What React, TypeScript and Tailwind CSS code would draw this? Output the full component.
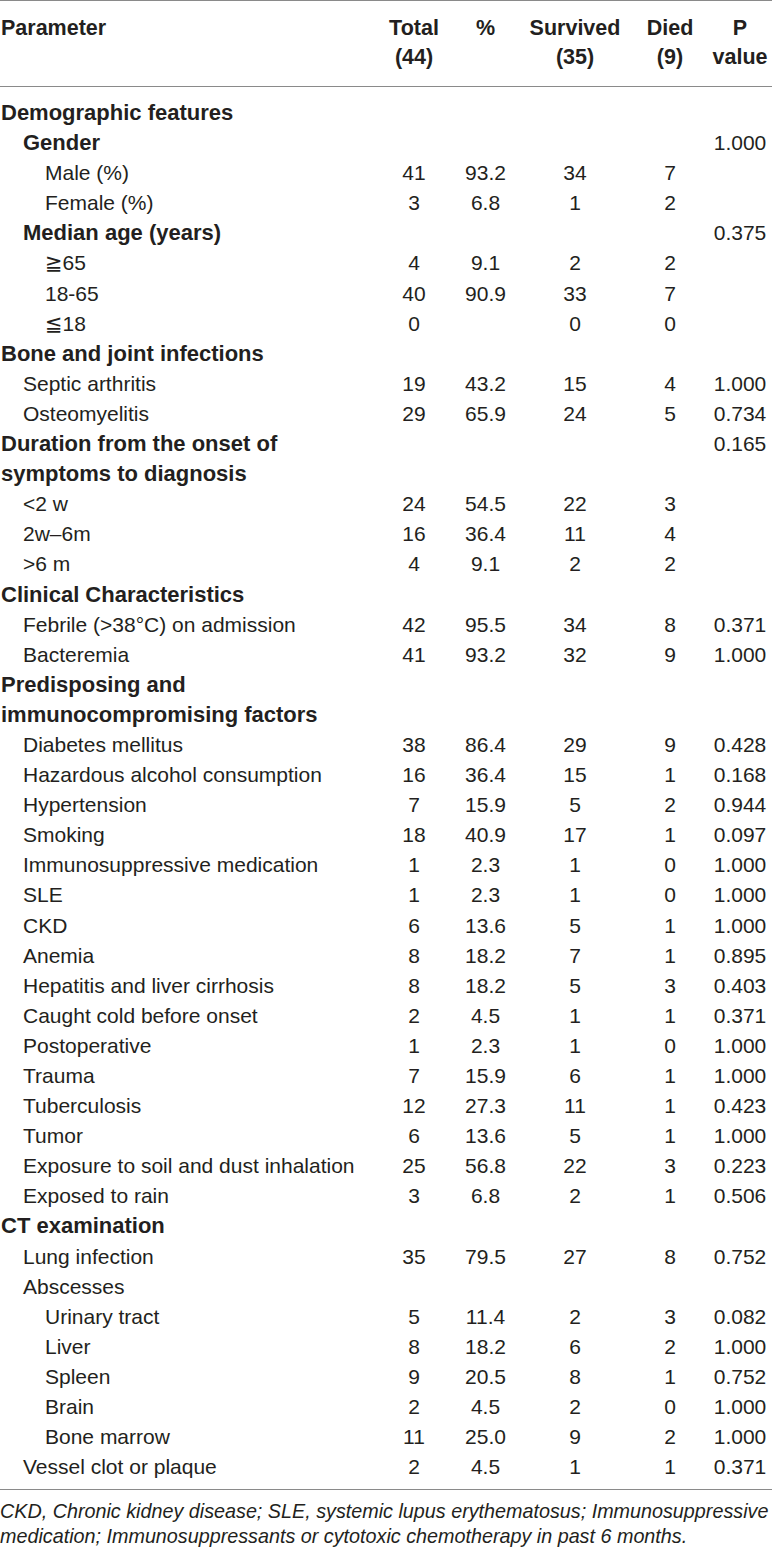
import React from "react";

type Row = {
  label: React.ReactNode;
  kind: "h0" | "h1" | "r1" | "r2";
  v?: [string, string, string, string, string];
};

const rows: Row[] = [
  { label: "Demographic features", kind: "h0" },
  { label: "Gender", kind: "h1", v: ["", "", "", "", "1.000"] },
  { label: "Male (%)", kind: "r2", v: ["41", "93.2", "34", "7", ""] },
  { label: "Female (%)", kind: "r2", v: ["3", "6.8", "1", "2", ""] },
  { label: "Median age (years)", kind: "h1", v: ["", "", "", "", "0.375"] },
  { label: "≧65", kind: "r2", v: ["4", "9.1", "2", "2", ""] },
  { label: "18-65", kind: "r2", v: ["40", "90.9", "33", "7", ""] },
  { label: "≦18", kind: "r2", v: ["0", "", "0", "0", ""] },
  { label: "Bone and joint infections", kind: "h0" },
  { label: "Septic arthritis", kind: "r1", v: ["19", "43.2", "15", "4", "1.000"] },
  { label: "Osteomyelitis", kind: "r1", v: ["29", "65.9", "24", "5", "0.734"] },
  {
    label: (
      <>
        Duration from the onset of
        <br />
        symptoms to diagnosis
      </>
    ),
    kind: "h0",
    v: ["", "", "", "", "0.165"],
  },
  { label: "<2 w", kind: "r1", v: ["24", "54.5", "22", "3", ""] },
  { label: "2w–6m", kind: "r1", v: ["16", "36.4", "11", "4", ""] },
  { label: ">6 m", kind: "r1", v: ["4", "9.1", "2", "2", ""] },
  { label: "Clinical Characteristics", kind: "h0" },
  { label: "Febrile (>38°C) on admission", kind: "r1", v: ["42", "95.5", "34", "8", "0.371"] },
  { label: "Bacteremia", kind: "r1", v: ["41", "93.2", "32", "9", "1.000"] },
  {
    label: (
      <>
        Predisposing and
        <br />
        immunocompromising factors
      </>
    ),
    kind: "h0",
  },
  { label: "Diabetes mellitus", kind: "r1", v: ["38", "86.4", "29", "9", "0.428"] },
  { label: "Hazardous alcohol consumption", kind: "r1", v: ["16", "36.4", "15", "1", "0.168"] },
  { label: "Hypertension", kind: "r1", v: ["7", "15.9", "5", "2", "0.944"] },
  { label: "Smoking", kind: "r1", v: ["18", "40.9", "17", "1", "0.097"] },
  { label: "Immunosuppressive medication", kind: "r1", v: ["1", "2.3", "1", "0", "1.000"] },
  { label: "SLE", kind: "r1", v: ["1", "2.3", "1", "0", "1.000"] },
  { label: "CKD", kind: "r1", v: ["6", "13.6", "5", "1", "1.000"] },
  { label: "Anemia", kind: "r1", v: ["8", "18.2", "7", "1", "0.895"] },
  { label: "Hepatitis and liver cirrhosis", kind: "r1", v: ["8", "18.2", "5", "3", "0.403"] },
  { label: "Caught cold before onset", kind: "r1", v: ["2", "4.5", "1", "1", "0.371"] },
  { label: "Postoperative", kind: "r1", v: ["1", "2.3", "1", "0", "1.000"] },
  { label: "Trauma", kind: "r1", v: ["7", "15.9", "6", "1", "1.000"] },
  { label: "Tuberculosis", kind: "r1", v: ["12", "27.3", "11", "1", "0.423"] },
  { label: "Tumor", kind: "r1", v: ["6", "13.6", "5", "1", "1.000"] },
  { label: "Exposure to soil and dust inhalation", kind: "r1", v: ["25", "56.8", "22", "3", "0.223"] },
  { label: "Exposed to rain", kind: "r1", v: ["3", "6.8", "2", "1", "0.506"] },
  { label: "CT examination", kind: "h0" },
  { label: "Lung infection", kind: "r1", v: ["35", "79.5", "27", "8", "0.752"] },
  { label: "Abscesses", kind: "r1" },
  { label: "Urinary tract", kind: "r2", v: ["5", "11.4", "2", "3", "0.082"] },
  { label: "Liver", kind: "r2", v: ["8", "18.2", "6", "2", "1.000"] },
  { label: "Spleen", kind: "r2", v: ["9", "20.5", "8", "1", "0.752"] },
  { label: "Brain", kind: "r2", v: ["2", "4.5", "2", "0", "1.000"] },
  { label: "Bone marrow", kind: "r2", v: ["11", "25.0", "9", "2", "1.000"] },
  { label: "Vessel clot or plaque", kind: "r1", v: ["2", "4.5", "1", "1", "0.371"] },
];

const grid = "grid grid-cols-[384px_60px_83px_96px_85px_64px]";

function labelClass(kind: Row["kind"]) {
  switch (kind) {
    case "h0":
      return "font-bold text-[22px] pl-[1px]";
    case "h1":
      return "font-bold text-[22px] pl-[23px]";
    case "r1":
      return "pl-[23px]";
    case "r2":
      return "pl-[45px]";
  }
}

export default function App() {
  return (
    <div
      className="w-[772px] bg-white text-[#231f20] text-[21px] leading-[30.1px]"
      style={{ fontFamily: '"Liberation Sans", Arial, "DejaVu Sans", sans-serif' }}
    >
      <div className="border-t border-[#8a8a8a]" />
      <div
        className={`${grid} font-bold text-[21.5px] pt-[13px] pb-[14px] leading-[29px] border-b border-[#8a8a8a]`}
      >
        <div className="pl-[1px]">Parameter</div>
        <div className="text-center">
          Total
          <br />
          (44)
        </div>
        <div className="text-center">%</div>
        <div className="text-center">
          Survived
          <br />
          (35)
        </div>
        <div className="text-center pl-[9px]">
          Died
          <br />
          (9)
        </div>
        <div className="text-center">
          P
          <br />
          value
        </div>
      </div>
      <div className="pt-[11px] pb-[7px] border-b border-[#8a8a8a]">
        {rows.map((r, i) => (
          <div key={i} className={grid}>
            <div className={labelClass(r.kind)}>{r.label}</div>
            <div className="text-center">{r.v?.[0]}</div>
            <div className="text-center">{r.v?.[1]}</div>
            <div className="text-center">{r.v?.[2]}</div>
            <div className="text-center pl-[9px]">{r.v?.[3]}</div>
            <div className="text-center">{r.v?.[4]}</div>
          </div>
        ))}
      </div>
      <div className="pt-[9px] text-[19.75px] leading-[25px] italic whitespace-nowrap">
        <div>CKD, Chronic kidney disease; SLE, systemic lupus erythematosus; Immunosuppressive</div>
        <div>medication; Immunosuppressants or cytotoxic chemotherapy in past 6 months.</div>
      </div>
    </div>
  );
}
